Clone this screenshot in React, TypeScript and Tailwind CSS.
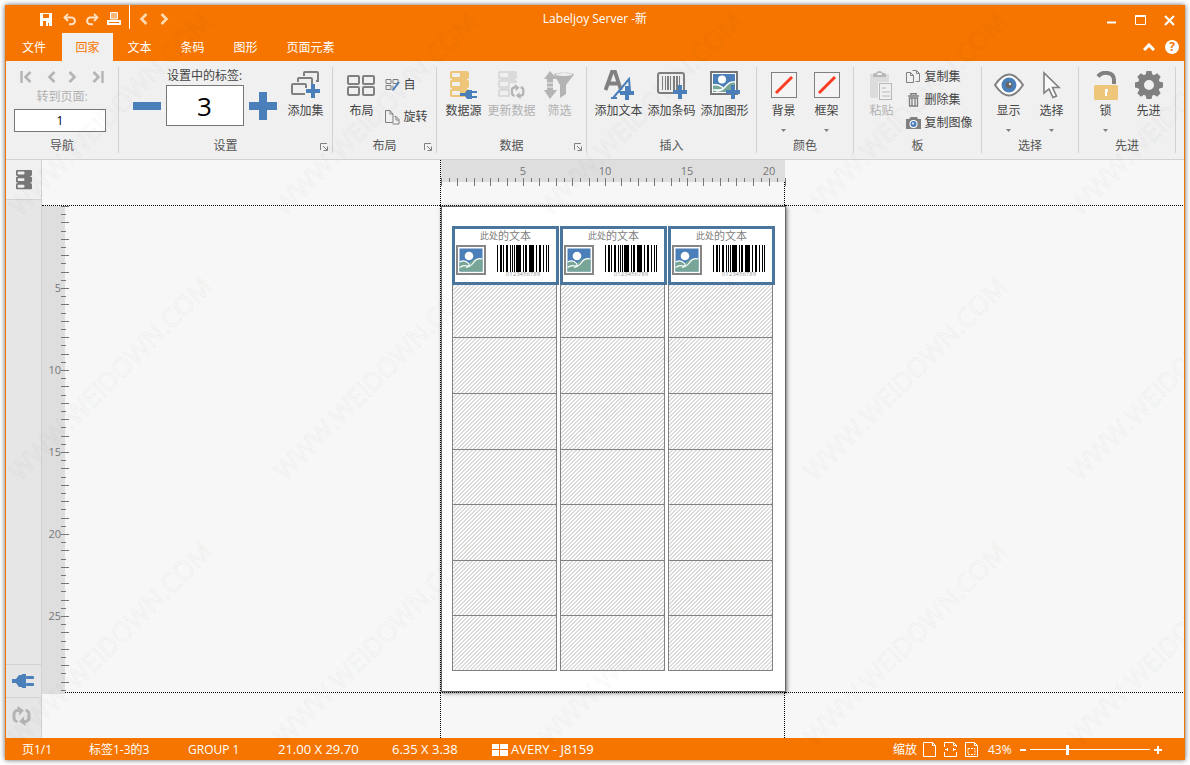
import type { ReactNode } from "react";

const GREY = "#808080";
const PALE = "#b4b4b4";
const BLUE = "#4a7fb9";
const SAND = "#eec679";

/* ---------- icons ---------- */

interface IconProps {
  w: number;
  h: number;
  children: ReactNode;
}

function Icon({ w, h, children }: IconProps) {
  return (
    <svg width={w} height={h} viewBox={`0 0 ${w} ${h}`} fill="none" aria-hidden="true" className="shrink-0">
      {children}
    </svg>
  );
}

function Chevron({ dir, bar = false, color }: { dir: "left" | "right"; bar?: boolean; color: string }) {
  return (
    <Icon w={13} h={12}>
      <g transform={dir === "right" ? "translate(13 0) scale(-1 1)" : undefined} stroke={color}>
        <path d="M10.5 1 5.5 6l5 5" strokeWidth="2.6" />
        {bar && <path d="M1.5 0v12" strokeWidth="2.4" />}
      </g>
    </Icon>
  );
}

function Undo({ flip = false }: { flip?: boolean }) {
  return (
    <Icon w={13} h={13}>
      <g transform={flip ? "translate(13 0) scale(-1 1)" : undefined} stroke="#ffe3c4">
        <path d="M5 1 1.5 4.5 5 8" strokeWidth="1.8" />
        <path d="M2 4.5h6.500a3.200 3.200 0 0 1 0 6.800H6" strokeWidth="2" />
      </g>
    </Icon>
  );
}

function Plug() {
  return (
    <svg width="22" height="16" viewBox="0 0 22 16" aria-hidden="true" fill={BLUE}>
      <path d="M0 6h4l3-4h3V1h4v14h-4v-1H7l-3-4H0z" />
      <rect x="14" y="3" width="8" height="3" rx="1" />
      <rect x="14" y="10" width="8" height="3" rx="1" />
    </svg>
  );
}

// stack of three drives
function Stack({ color, slot }: { color: string; slot: string }) {
  return (
    <>
      {[0, 9, 18].map((y) => (
        <g key={y}>
          <rect x="0" y={y} width="19" height="8" rx="1.5" fill={color} />
          <rect x="2" y={y + 7} width="15" height="3" fill={y < 18 ? color : "none"} />
          <rect x="2" y={y + 2} width="8" height="4" rx="1" fill={slot} />
        </g>
      ))}
    </>
  );
}

function RefreshShape({ color }: { color: string }) {
  return (
    <g stroke={color} strokeWidth="3">
      <path d="M5.500 15.500A3.500 3.500 0 0 1 2 12V8a3.500 3.500 0 0 1 3.500-3.500H7" />
      <path d="M13.500 4.500A3.500 3.500 0 0 1 17 8v4a3.500 3.500 0 0 1-3.500 3.500H12" />
      <path d="M5.500 0l6.500 4.500L7 9.500V6H5.500z" fill={color} stroke="none" />
      <path d="M13.500 20 7 15.500l5-5V14h1.500z" fill={color} stroke="none" />
    </g>
  );
}

function Plus({ x, y }: { x: number; y: number }) {
  return <path d={`M${x + 7} ${y}v14M${x} ${y + 7}h14`} stroke={BLUE} strokeWidth="4" />;
}

function Picture({ size }: { size: number }) {
  return (
    <svg width={size} height={size} viewBox="0 0 30 30" aria-hidden="true">
      <rect x="1" y="1" width="28" height="28" fill="#fff" stroke="#868686" strokeWidth="2" />
      <rect x="3.5" y="3.5" width="23" height="23" fill={BLUE} />
      <path d="M3.500 17.500q5-3 9.500.5 8-7 13.500-3.500v12h-23z" fill="#78a696" />
      <path
        d="M3.500 17q5.500-3 9 1.500 2 3-1.500 2.500-4-1-7.500 1.500M10 22.500q5-1 8-5.500t8.500-3"
        fill="none"
        stroke="#fff"
        strokeWidth="1.2"
      />
      <circle cx="13" cy="11" r="4.3" fill="#fff" />
    </svg>
  );
}

function LayoutIcon() {
  return (
    <Icon w={28} h={21}>
      {[1, 16].map((x) =>
        [1, 12].map((y) => (
          <rect key={`${x}-${y}`} x={x} y={y} width="11" height="8" rx="1" stroke={GREY} strokeWidth="2" />
        ))
      )}
    </Icon>
  );
}

function AddSetIcon() {
  return (
    <Icon w={30} h={29}>
      <g stroke={GREY} strokeWidth="2">
        <path d="M13 5V2a1 1 0 0 1 1-1h12a1 1 0 0 1 1 1v8h-2" />
        <path d="M7 11V8a1 1 0 0 1 1-1h12a1 1 0 0 1 1 1v5" />
        <path d="M14 23H2a1 1 0 0 1-1-1v-8a1 1 0 0 1 1-1h12a1 1 0 0 1 1 1v3" />
      </g>
      <Plus x={15} y={13} />
    </Icon>
  );
}

function AutoIcon() {
  return (
    <Icon w={15} h={14}>
      <path d="M1 1.500h5v4H1zM8 1.500h5v4H8zM1 7.500h5v4H1zM8 7.500v4" stroke={GREY} />
      <path d="M14 4 8 12" stroke={BLUE} strokeWidth="2" />
      <path d="M7 13l1-2 1 1z" fill={BLUE} />
    </Icon>
  );
}

function RotateIcon() {
  return (
    <Icon w={15} h={15}>
      <path d="M.5 12.500V.5H5L8 4v8.500zM5 .5V4h3" stroke={GREY} />
      <path d="M9.500 6.500H11l3 3v4.500H7.500M11 6.500V10h3" stroke={GREY} />
    </Icon>
  );
}

function DataSourceIcon() {
  return (
    <Icon w={27} h={28}>
      <Stack color={SAND} slot="#f0f0f0" />
      <path d="M10 22h5l2-3h5v9h-5l-2-3h-5z" fill={BLUE} />
      <path d="M22 21h5M22 26h5" stroke={BLUE} strokeWidth="2" />
    </Icon>
  );
}

function UpdateDataIcon() {
  return (
    <Icon w={27} h={28}>
      <Stack color="#dadada" slot="#f0f0f0" />
      <rect x="12" y="12" width="15" height="16" fill="#f0f0f0" />
      <g transform="translate(12.500 13) scale(.75)">
        <RefreshShape color={PALE} />
      </g>
    </Icon>
  );
}

function FilterIcon() {
  return (
    <Icon w={31} h={29}>
      <path d="M6 0l7 8H9v11h4l-7 9-6-9h3V8H0z" fill={PALE} />
      <path d="M9 12H3M9 16H3" stroke="#f0f0f0" strokeWidth="1" />
      <path d="M10 3.500C10 1 30 1 30 3.500L22 14v9l-6 4V14z" fill={PALE} />
      <ellipse cx="20" cy="3.5" rx="8.5" ry="1.5" fill="#f0f0f0" />
    </Icon>
  );
}

function AddTextIcon() {
  return (
    <Icon w={30} h={30}>
      <path d="M1.500 20 8 2h3l6 18M4.500 13.500h9" stroke={GREY} strokeWidth="3.8" />
      <path d="M9 28 25 9l1 12M7 28h6M15 22h8" stroke={BLUE} strokeWidth="2" />
      <Plus x={16} y={16} />
    </Icon>
  );
}

function AddBarcodeIcon() {
  return (
    <Icon w={30} h={27}>
      <rect x="1" y="1" width="26" height="20" rx="2" stroke={GREY} strokeWidth="2" />
      <path d="M5.500 4v14M8.500 4v14M13.500 4v14M22.500 4v14" stroke={GREY} />
      <path d="M11 4v14M17 4v14M20 4v14" stroke={GREY} strokeWidth="2" />
      <Plus x={16} y={13} />
    </Icon>
  );
}

function AddPictureIcon() {
  return (
    <Icon w={30} h={28}>
      <rect x="1" y="1" width="26" height="22" fill="#fff" stroke="#777" strokeWidth="2" />
      <rect x="3" y="3" width="22" height="18" fill={BLUE} />
      <path d="M3 15q4-2 8 0 2 2 4 0 5-5 10-4v10H3z" fill="#78a696" />
      <path d="M3 14q5-1 9 2t-9 3M6 20q6 0 10-5t9-4" stroke="#fff" strokeWidth="1.3" />
      <circle cx="12" cy="8.5" r="4" fill="#fff" />
      <Plus x={16} y={14} />
    </Icon>
  );
}

function SwatchIcon() {
  return (
    <Icon w={26} h={26}>
      <rect x=".5" y=".5" width="25" height="25" stroke={GREY} fill="#f4f4f4" />
      <path d="M5 21 21 5" stroke="#fb3b22" strokeWidth="3" />
    </Icon>
  );
}

function PasteIcon() {
  return (
    <Icon w={24} h={30}>
      <path d="M1 4h19v8H9v16H3a2 2 0 0 1-2-2z" fill="#dcdcdc" />
      <path d="M4 7V5a2 2 0 0 1 2-2h1a4 4 0 0 1 7 0h1a2 2 0 0 1 2 2v2z" fill="#b8b8b8" />
      <rect x="8" y="3" width="5" height="2" rx="1" fill="#f0f0f0" />
      <rect x="10.5" y="13.5" width="12" height="16" fill="#f0f0f0" stroke="#b8b8b8" />
      <path d="M13 18h4M13 22h8M13 26h8" stroke="#b8b8b8" />
    </Icon>
  );
}

function CopySetIcon() {
  return (
    <Icon w={15} h={14}>
      <path d="M.5 12.500V2.500h4l3 3v7zM4.500 2.500v3h3" stroke={GREY} />
      <path d="M6.500.5h4l3 3v8H9.500M10.500.5v3h3" stroke={GREY} />
    </Icon>
  );
}

function TrashIcon() {
  return (
    <Icon w={15} h={14}>
      <path d="M2 3h11M5 2V.8h5V2" stroke={GREY} strokeWidth="1.5" />
      <path d="M3.500 5v8h8V5zM6 5v8M9 5v8" stroke={GREY} strokeWidth="1.3" />
    </Icon>
  );
}

function CameraIcon() {
  return (
    <Icon w={15} h={14}>
      <path d="M0 3h3l2-2h6l1 2h3v10H0z" fill={GREY} />
      <circle cx="7.5" cy="8" r="4" fill="#fff" />
      <circle cx="7.5" cy="8" r="3" fill={BLUE} />
      <circle cx="7" cy="7.5" r="1" fill="#fff" />
    </Icon>
  );
}

function EyeIcon() {
  return (
    <Icon w={30} h={24}>
      <path d="M1 12Q15-9 29 12 15 33 1 12z" fill="#fff" stroke={GREY} strokeWidth="2" />
      <circle cx="15" cy="12" r="7.5" fill={BLUE} />
      <circle cx="15" cy="12" r="3.3" fill="#666" />
      <circle cx="16" cy="11" r="1.2" fill="#eee" />
    </Icon>
  );
}

function CursorIcon() {
  return (
    <Icon w={19} h={28}>
      <path d="M2 2v20l5-4 4 8.500 3.500-1.500-4-8.500H17z" fill="#fafafa" stroke={GREY} strokeWidth="1.6" />
    </Icon>
  );
}

function LockIcon() {
  return (
    <Icon w={26} h={29}>
      <path d="M5 5.500C9 0 21 .5 21 9v4" stroke={GREY} strokeWidth="4" />
      <rect x="1" y="14" width="24" height="15" rx="1.5" fill={SAND} />
      <path d="M12 18h3v3h-1v4h-2z" fill="#fff" />
    </Icon>
  );
}

function GearIcon() {
  return (
    <Icon w={28} h={28}>
      <circle cx="14" cy="14" r="8" stroke={GREY} strokeWidth="6" />
      {[0, 45, 90, 135, 180, 225, 270, 315].map((a) => (
        <path key={a} d="M10.500 4 11.500 0h5l1 4z" fill={GREY} transform={`rotate(${a} 14 14)`} />
      ))}
    </Icon>
  );
}

/* ---------- ribbon ---------- */

interface GroupProps {
  title: string;
  width: string;
  launcher?: boolean;
  children: ReactNode;
}

function Group({ title, width, launcher, children }: GroupProps) {
  return (
    <section aria-label={title} className={`${width} flex h-[86px] shrink-0 flex-col border-r border-[#d2d2d2]`}>
      <div className="flex flex-1 justify-center">{children}</div>
      <div className="relative h-3.5 text-center leading-[14px] text-[#555]">
        {title}
        {launcher && (
          <button aria-label={`${title} 选项`} className="absolute right-1 top-1">
            <Icon w={8} h={8}>
              <path d="M.5 7V.5H7" stroke={GREY} />
              <path d="M3 3l4 4M7.500 3.500v4h-4" stroke={GREY} />
            </Icon>
          </button>
        )}
      </div>
    </section>
  );
}

interface BigButtonProps {
  label: string;
  icon: ReactNode;
  width: string;
  menu?: boolean;
  disabled?: boolean;
}

function BigButton({ label, icon, width, menu, disabled }: BigButtonProps) {
  return (
    <button
      disabled={disabled}
      className={`${width} flex shrink-0 flex-col items-center whitespace-nowrap pt-0.5 ${disabled ? "text-[#b0b0b0]" : "text-[#444]"}`}
    >
      <span className="flex h-8 items-center">{icon}</span>
      <span className="mt-0.5 leading-4">{label}</span>
      {menu && (
        <span className="mt-2.5">
          <Icon w={5} h={3}>
            <path d="M0 0h5L2.500 3z" fill={GREY} />
          </Icon>
        </span>
      )}
    </button>
  );
}

function SmallButton({ label, icon }: { label: string; icon: ReactNode }) {
  return (
    <button className="flex h-5 items-center gap-[3px] whitespace-nowrap text-[#444]">
      {icon}
      {label}
    </button>
  );
}

function Ribbon() {
  return (
    <div className="flex border-b border-[#d2d2d2] bg-[#f0f0f0] pb-1.5 pt-1.5">
      <Group title="导航" width="w-[113px]">
        <div className="flex w-full flex-col px-2 pt-1">
          <div className="flex justify-between px-1.5">
            <button aria-label="第一页"><Chevron dir="left" bar color={PALE} /></button>
            <button aria-label="上一页"><Chevron dir="left" color={PALE} /></button>
            <button aria-label="下一页"><Chevron dir="right" color={PALE} /></button>
            <button aria-label="最后一页"><Chevron dir="right" bar color={PALE} /></button>
          </div>
          <label htmlFor="goto" className="mt-1.5 text-center leading-4 text-[#b0b0b0]">转到页面:</label>
          <input
            id="goto"
            defaultValue="1"
            className="mr-1 mt-1 h-[23px] min-w-0 border border-[#777] bg-white text-center text-black"
          />
        </div>
      </Group>

      <Group title="设置" width="w-[214px]" launcher>
        <div className="ml-3 mr-1 flex flex-col items-center">
          <label htmlFor="count" className="leading-[18px] text-[#444]">设置中的标签:</label>
          <div className="flex items-center gap-[5px]">
            <button aria-label="减少">
              <Icon w={28} h={28}>
                <path d="M0 14h28" stroke={BLUE} strokeWidth="8" />
              </Icon>
            </button>
            <input
              id="count"
              defaultValue="3"
              className="h-[41px] w-[78px] border border-[#777] bg-white text-center text-[26px] leading-8 text-black"
            />
            <button aria-label="增加">
              <Icon w={28} h={28}>
                <path d="M0 14h28M14 0v28" stroke={BLUE} strokeWidth="8" />
              </Icon>
            </button>
          </div>
        </div>
        <BigButton label="添加集" icon={<AddSetIcon />} width="w-[50px]" />
      </Group>

      <Group title="布局" width="w-[104px]" launcher>
        <BigButton label="布局" icon={<LayoutIcon />} width="w-12" />
        <div className="flex flex-col gap-3 pr-1 pt-2">
          <SmallButton label="自" icon={<AutoIcon />} />
          <SmallButton label="旋转" icon={<RotateIcon />} />
        </div>
      </Group>

      <Group title="数据" width="w-[150px]" launcher>
        <BigButton label="数据源" icon={<DataSourceIcon />} width="w-12" />
        <BigButton label="更新数据" icon={<UpdateDataIcon />} width="w-12" disabled />
        <BigButton label="筛选" icon={<FilterIcon />} width="w-12" disabled />
      </Group>

      <Group title="插入" width="w-[170px]">
        <BigButton label="添加文本" icon={<AddTextIcon />} width="w-[53px]" />
        <BigButton label="添加条码" icon={<AddBarcodeIcon />} width="w-[53px]" />
        <BigButton label="添加图形" icon={<AddPictureIcon />} width="w-[53px]" />
      </Group>

      <Group title="颜色" width="w-[97px]">
        <BigButton label="背景" icon={<SwatchIcon />} width="w-[43px]" menu />
        <BigButton label="框架" icon={<SwatchIcon />} width="w-[43px]" menu />
      </Group>

      <Group title="板" width="w-[128px]">
        <BigButton label="粘贴" icon={<PasteIcon />} width="w-[50px]" disabled />
        <div className="flex flex-col gap-[3px] pr-1.5">
          <SmallButton label="复制集" icon={<CopySetIcon />} />
          <SmallButton label="删除集" icon={<TrashIcon />} />
          <SmallButton label="复制图像" icon={<CameraIcon />} />
        </div>
      </Group>

      <Group title="选择" width="w-[97px]">
        <BigButton label="显示" icon={<EyeIcon />} width="w-[43px]" menu />
        <BigButton label="选择" icon={<CursorIcon />} width="w-[43px]" menu />
      </Group>

      <Group title="先进" width="w-[97px]">
        <BigButton label="锁" icon={<LockIcon />} width="w-[43px]" menu />
        <BigButton label="先进" icon={<GearIcon />} width="w-[43px]" />
      </Group>
    </div>
  );
}

/* ---------- title bar and tabs ---------- */

function TitleBar() {
  return (
    <header className="grid h-7 grid-cols-[1fr_auto_1fr] items-center">
      <div className="flex h-7 items-center pl-[34px]">
        <button aria-label="保存" className="mr-2.5">
          <Icon w={13} h={13}>
            <path d="M0 0h12v13H0z" fill="#fff" />
            <path d="M3 1h6v4H3zM3 8h3v5H3zM8 10h1v3H8z" fill="#f57500" />
          </Icon>
        </button>
        <button aria-label="撤销" className="mr-2.5"><Undo /></button>
        <button aria-label="重做" className="mr-2"><Undo flip /></button>
        <button aria-label="打印">
          <Icon w={14} h={14}>
            <path d="M3.500 7V.5h7V7z" stroke="#fff" fill="#fbb777" />
            <path d="M0 8h14v5H0z" fill="#fff" />
            <path d="M2 10.500h10" stroke="#f57500" />
          </Icon>
        </button>
        <span className="ml-2 mr-1.5 h-6 self-start border-l border-white" />
        <button aria-label="后退" className="mr-2.5"><Chevron dir="left" color="#ffd9b0" /></button>
        <button aria-label="前进"><Chevron dir="right" color="#ffd9b0" /></button>
      </div>
      <h1 className="text-white">Labeljoy Server -新</h1>
      <div className="flex items-center justify-end gap-[18px] pr-[9px] pt-0.5">
        <button aria-label="最小化">
          <Icon w={11} h={11}><path d="M1 7.500h9" stroke="#fff" strokeWidth="2" /></Icon>
        </button>
        <button aria-label="最大化">
          <Icon w={11} h={11}>
            <path d="M.5 1v8.500h10V1" stroke="#fff" />
            <path d="M0 1h11" stroke="#fff" strokeWidth="2" />
          </Icon>
        </button>
        <button aria-label="关闭">
          <Icon w={11} h={11}><path d="M1 1l9 9M10 1l-9 9" stroke="#fff" strokeWidth="2" /></Icon>
        </button>
      </div>
    </header>
  );
}

const tabs = [
  { name: "文件", width: "w-14" },
  { name: "回家", width: "w-[51px]" },
  { name: "文本", width: "w-[53px]" },
  { name: "条码", width: "w-[53px]" },
  { name: "图形", width: "w-[53px]" },
  { name: "页面元素", width: "w-[77px]" },
];

function Tabs() {
  return (
    <nav className="flex h-7">
      {tabs.map((tab) => (
        <button
          key={tab.name}
          className={`${tab.width} pt-0.5 ${tab.name === "回家" ? "bg-[#f0f0f0] text-[#f57500]" : "text-white"}`}
        >
          {tab.name}
        </button>
      ))}
      <div className="ml-auto flex items-center gap-2.5 pr-[5px]">
        <button aria-label="折叠功能区">
          <Icon w={12} h={8}><path d="M1 7l5-5 5 5" stroke="#fff" strokeWidth="3" /></Icon>
        </button>
        <button
          aria-label="帮助"
          className="size-3.5 rounded-full bg-white text-center text-xs font-bold leading-[14px] text-[#f57500]"
        >
          ?
        </button>
      </div>
    </nav>
  );
}

/* ---------- workspace ---------- */

const CM = 16.4;

function HorizontalRuler() {
  return (
    <svg width="343" height="27" className="block overflow-visible" aria-hidden="true">
      <rect width="344" height="22" fill="#dedede" />
      {Array.from({ length: 43 }, (_, i) => (
        <rect key={i} x={Math.round((i * CM) / 2)} y="18" width="1" height={i % 2 ? 4 : 8} fill="#777" />
      ))}
      {[5, 10, 15, 20].map((n) => (
        <text key={n} x={n * CM} y="15" textAnchor="middle" fontSize="11" fill="#777">{n}</text>
      ))}
    </svg>
  );
}

function VerticalRuler() {
  return (
    <svg width="28" height="486" className="block overflow-visible" aria-hidden="true">
      <rect width="23" height="488" fill="#dedede" />
      {Array.from({ length: 60 }, (_, i) => (
        <rect key={i} x="19" y={Math.round((i * CM) / 2)} width={i % 2 ? 5 : 8} height="1" fill="#777" />
      ))}
      {[5, 10, 15, 20, 25].map((n) => (
        <text key={n} x="19" y={n * CM + 4} textAnchor="end" fontSize="11" fill="#777">{n}</text>
      ))}
    </svg>
  );
}

const bars = [
  [0, 1], [3, 2], [6, 1], [9, 2], [13, 1], [15, 1], [17, 1], [19, 5], [26, 1], [28, 2],
  [32, 5], [39, 1], [42, 2], [46, 1], [49, 1], [51, 1],
];

function Label() {
  return (
    <div className="absolute -left-px -top-px z-10 h-[59px] w-[107px] border-3 border-[#4a759c] bg-white">
      <p className="flex items-center justify-center text-[11px] leading-[14px] text-[#808080]">
        <span className="text-[9px]">此处</span>的文本
      </p>
      <div className="flex gap-[11px] pl-px pt-0.5">
        <Picture size={30} />
        <div className="text-center">
          <svg width="52" height="27" className="block" aria-hidden="true">
            {bars.map(([x, w]) => (
              <rect key={x} x={x} width={w} height="27" fill="#000" />
            ))}
          </svg>
          <p className="text-[6px] leading-[4px] text-[#999]">0123456789</p>
        </div>
      </div>
    </div>
  );
}

function Sheet() {
  return (
    <div className="-mr-0.5 h-full border border-[#666] bg-white pl-2.5 pt-[19px] shadow-[1px_1px_4px_#0000008c]">
      <div className="grid h-[445px] w-[321px] grid-cols-[repeat(3,105px)] grid-rows-8 gap-x-[3px]">
        {Array.from({ length: 24 }, (_, i) => (
          <div
            key={i}
            className="relative border-x border-t border-[#828282] bg-[linear-gradient(135deg,#fff_25%,#dcdcdc_25%_50%,#fff_50%_75%,#dcdcdc_75%)] bg-[length:4px_4px] nth-last-[-n+3]:border-b"
          >
            {i < 3 && <Label />}
          </div>
        ))}
      </div>
    </div>
  );
}

function Workspace() {
  return (
    <main className="grid flex-1 grid-cols-[1fr_345px_1fr] grid-rows-[45px_488px_1fr] bg-[#f7f7f7] pr-px">
      <div />
      <div className="border-x border-dotted border-black"><HorizontalRuler /></div>
      <div />
      <div className="border-y border-dotted border-black"><VerticalRuler /></div>
      <div className="border border-dotted border-black"><Sheet /></div>
      <div className="border-y border-dotted border-black" />
      <div />
      <div className="border-x border-dotted border-black" />
      <div />
    </main>
  );
}

function SideBar() {
  return (
    <aside className="flex w-9 shrink-0 flex-col border-r border-[#d2d2d2] bg-[#e6e6e6]">
      <button aria-label="数据库" className="flex h-10 items-center justify-center border-b border-[#d2d2d2] bg-[#f0f0f0]">
        <svg width="16" height="20" viewBox="0 0 19 27" preserveAspectRatio="none" aria-hidden="true">
          <Stack color="#777" slot="#f0f0f0" />
        </svg>
      </button>
      <div className="flex-1" />
      <button aria-label="连接" className="flex h-[33px] items-center justify-center border-t border-[#d2d2d2] pr-0.5">
        <Plug />
      </button>
      <button aria-label="刷新" className="flex h-[41px] items-center justify-center border-t border-[#d2d2d2] pb-1 pr-1">
        <Icon w={19} h={20}>
          <RefreshShape color={PALE} />
        </Icon>
      </button>
    </aside>
  );
}

/* ---------- status bar ---------- */

function StatusBar() {
  return (
    <footer className="flex h-[22px] items-center whitespace-nowrap pl-4 pr-[22px] pt-px text-white">
      <span className="w-[67px]">页1/1</span>
      <span className="w-[99px]">标签1-3的3</span>
      <span className="w-[90px]">GROUP 1</span>
      <span className="w-[114px] text-[13px]">21.00 X 29.70</span>
      <span className="w-[100px] text-[13px]">6.35 X 3.38</span>
      <Icon w={16} h={12}>
        <path d="M0 0h7v5H0zM8 0h8v5H8zM0 6h7v6H0zM8 6h8v6H8z" fill="#fff" />
      </Icon>
      <span className="ml-[3px] text-[13px]">AVERY - J8159</span>
      <div className="ml-auto flex items-center">
        <label htmlFor="zoom" className="mr-1.5">缩放</label>
        <div className="flex gap-2">
          <button aria-label="整页">
            <Icon w={13} h={15}><path d="M.5.5h9l3 3v11H.5zM9.500.5v3h3" stroke="#fff" /></Icon>
          </button>
          <button aria-label="页宽">
            <Icon w={13} h={15}>
              <path d="M.5 5V.5h9l3 3V5M.5 10v4.500h12V10M9.500.5v3h3M1 7.500h3M9 7.500h3M3.500 6v3M9.500 6v3" stroke="#fff" />
            </Icon>
          </button>
          <button aria-label="选区">
            <Icon w={13} h={15}>
              <path d="M.5.5h9l3 3v11H.5zM9.500.5v3h3" stroke="#fff" />
              <path d="M3 6.500h7v6H3z" stroke="#fff" strokeDasharray="2 1" />
            </Icon>
          </button>
        </div>
        <span className="ml-2.5 w-8">43%</span>
        <button aria-label="缩小">
          <Icon w={6} h={8}><path d="M0 4h6" stroke="#fff" strokeWidth="2" /></Icon>
        </button>
        <input
          id="zoom"
          type="range"
          defaultValue={31}
          className="mx-1 h-3 w-[120px] appearance-none bg-[linear-gradient(#fff,#fff)] bg-[length:100%_1px] bg-center bg-no-repeat [&::-webkit-slider-thumb]:h-2.5 [&::-webkit-slider-thumb]:w-[3px] [&::-webkit-slider-thumb]:appearance-none [&::-webkit-slider-thumb]:bg-white"
        />
        <button aria-label="放大">
          <Icon w={8} h={8}><path d="M0 4h8M4 0v8" stroke="#fff" strokeWidth="2" /></Icon>
        </button>
      </div>
    </footer>
  );
}

function Watermark() {
  return (
    <div aria-hidden="true" className="pointer-events-none absolute inset-0 z-20 overflow-hidden">
      <div className="-ml-7 -mt-6 grid auto-rows-[265px] grid-cols-[repeat(5,265px)]">
        {Array.from({ length: 15 }, (_, i) => (
          <div key={i} className="flex items-center justify-center">
            <span className="-rotate-45 whitespace-nowrap text-[26px] text-transparent [-webkit-text-stroke:1px_#0000000d]">
              WWW.WEIDOWN.COM
            </span>
          </div>
        ))}
      </div>
    </div>
  );
}

export default function App() {
  return (
    <div className="flex min-h-screen flex-col bg-white p-[5px] font-['Open_Sans','Noto_Sans_CJK_SC',sans-serif] text-xs">
      <div className="relative flex flex-1 flex-col border-x border-[#f57500] bg-[#f57500] shadow-[0_0_5px_#000000a0]">
        <TitleBar />
        <Tabs />
        <Ribbon />
        <div className="flex flex-1">
          <SideBar />
          <Workspace />
        </div>
        <StatusBar />
        <Watermark />
      </div>
    </div>
  );
}
